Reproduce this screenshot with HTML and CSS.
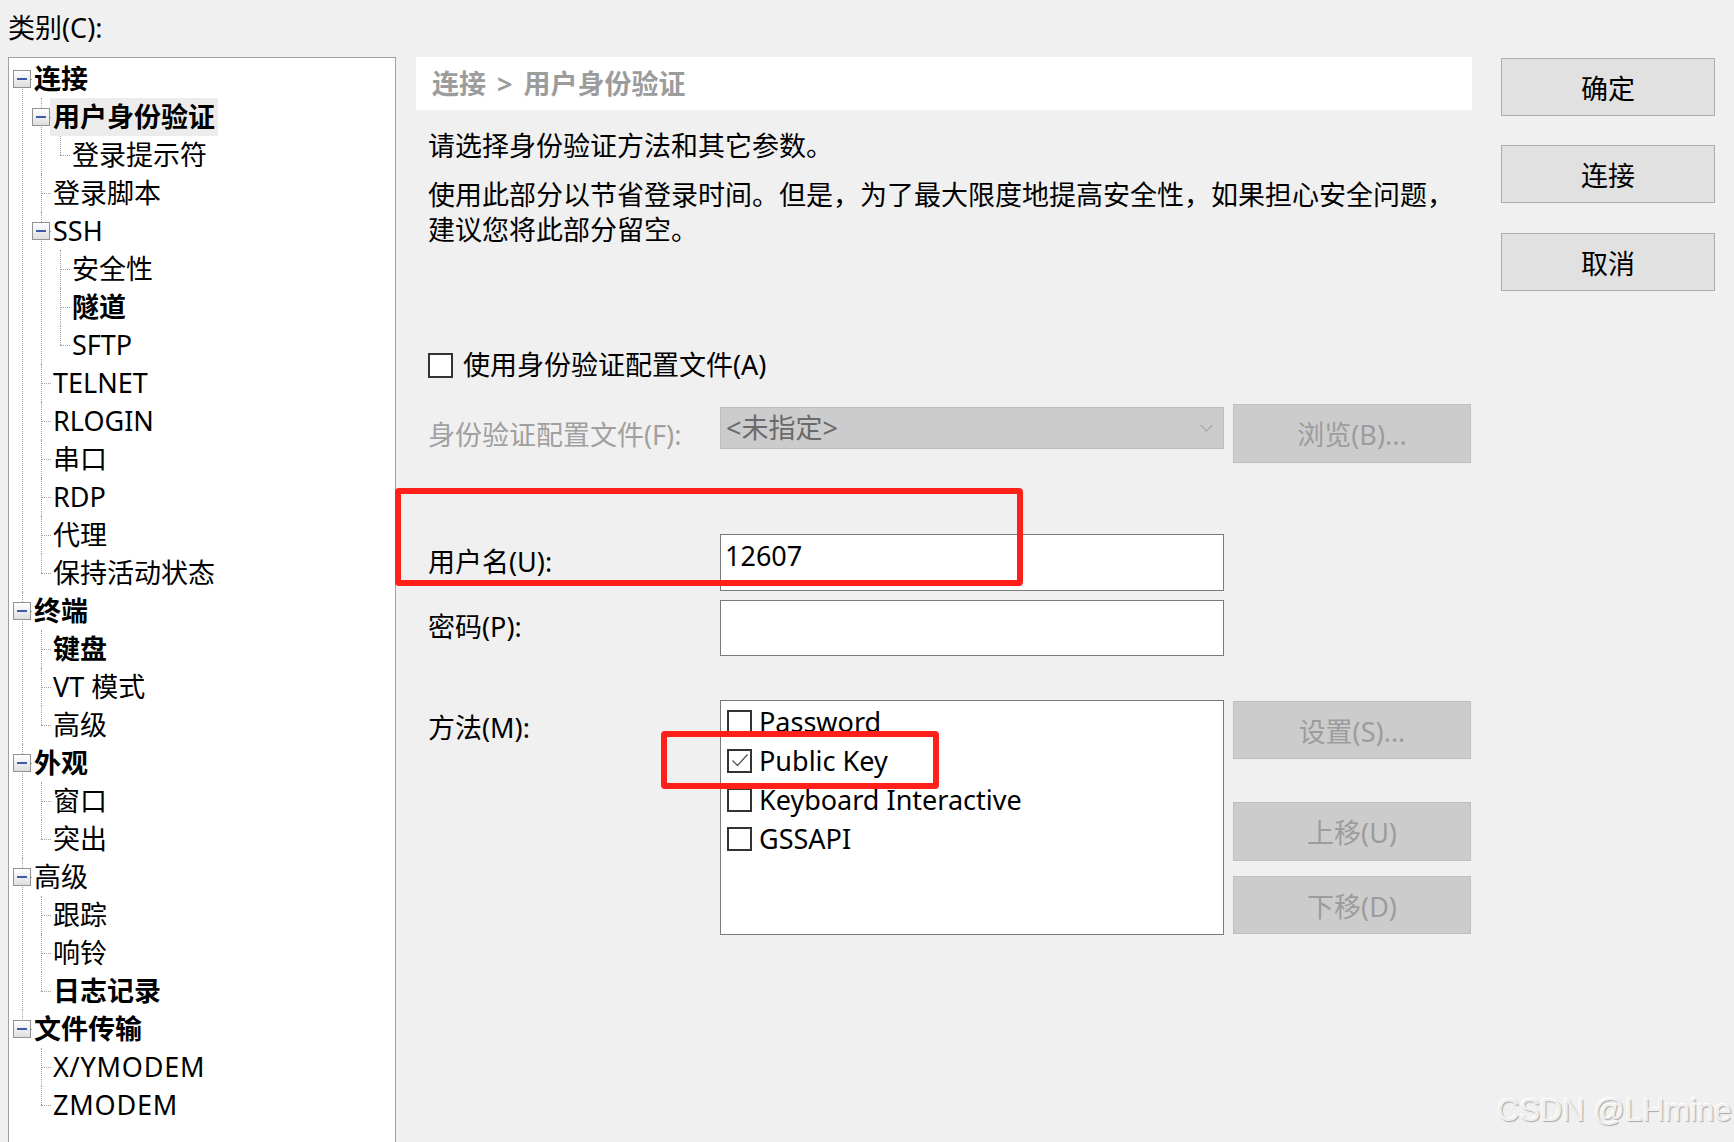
FILE: index.html
```html
<!DOCTYPE html>
<html lang="zh-CN">
<head>
<meta charset="utf-8">
<title>会话属性</title>
<link rel="stylesheet" href="styles.css">
</head>
<body>
<div class="page">
  <div class="cat-label">类别(C):</div>
  <div class="main">
    <div class="tree-panel">
      <ul class="tree l0">
        <li><div class="row"><span class="box"></span><span class="lbl b">连接</span></div>
          <ul class="l1">
            <li><div class="row"><span class="box"></span><span class="lbl b sel">用户身份验证</span></div>
              <ul class="l2">
                <li><div class="row"><span class="slot"></span><span class="lbl">登录提示符</span></div></li>
              </ul>
            </li>
            <li><div class="row"><span class="slot"></span><span class="lbl">登录脚本</span></div></li>
            <li><div class="row"><span class="box"></span><span class="lbl">SSH</span></div>
              <ul class="l2">
                <li><div class="row"><span class="slot"></span><span class="lbl">安全性</span></div></li>
                <li><div class="row"><span class="slot"></span><span class="lbl b">隧道</span></div></li>
                <li><div class="row"><span class="slot"></span><span class="lbl">SFTP</span></div></li>
              </ul>
            </li>
            <li><div class="row"><span class="slot"></span><span class="lbl">TELNET</span></div></li>
            <li><div class="row"><span class="slot"></span><span class="lbl">RLOGIN</span></div></li>
            <li><div class="row"><span class="slot"></span><span class="lbl">串口</span></div></li>
            <li><div class="row"><span class="slot"></span><span class="lbl">RDP</span></div></li>
            <li><div class="row"><span class="slot"></span><span class="lbl">代理</span></div></li>
            <li><div class="row"><span class="slot"></span><span class="lbl">保持活动状态</span></div></li>
          </ul>
        </li>
        <li><div class="row"><span class="box"></span><span class="lbl b">终端</span></div>
          <ul class="l1">
            <li><div class="row"><span class="slot"></span><span class="lbl b">键盘</span></div></li>
            <li><div class="row"><span class="slot"></span><span class="lbl">VT 模式</span></div></li>
            <li><div class="row"><span class="slot"></span><span class="lbl">高级</span></div></li>
          </ul>
        </li>
        <li><div class="row"><span class="box"></span><span class="lbl b">外观</span></div>
          <ul class="l1">
            <li><div class="row"><span class="slot"></span><span class="lbl">窗口</span></div></li>
            <li><div class="row"><span class="slot"></span><span class="lbl">突出</span></div></li>
          </ul>
        </li>
        <li><div class="row"><span class="box"></span><span class="lbl">高级</span></div>
          <ul class="l1">
            <li><div class="row"><span class="slot"></span><span class="lbl">跟踪</span></div></li>
            <li><div class="row"><span class="slot"></span><span class="lbl">响铃</span></div></li>
            <li><div class="row"><span class="slot"></span><span class="lbl b">日志记录</span></div></li>
          </ul>
        </li>
        <li><div class="row"><span class="box"></span><span class="lbl b">文件传输</span></div>
          <ul class="l1">
            <li><div class="row"><span class="slot"></span><span class="lbl wide">X/YMODEM</span></div></li>
            <li><div class="row"><span class="slot"></span><span class="lbl wide">ZMODEM</span></div></li>
          </ul>
        </li>
      </ul>
    </div>

    <div class="content">
      <div class="crumb">连接<span class="sep">&gt;</span>用户身份验证</div>
      <p class="desc desc1">请选择身份验证方法和其它参数。</p>
      <p class="desc desc2">使用此部分以节省登录时间。但是，为了最大限度地提高安全性，如果担心安全问题，<br>建议您将此部分留空。</p>
      <div class="check-row"><span class="cbox"></span><span>使用身份验证配置文件(A)</span></div>

      <div class="frow row-profile">
        <div class="flabel dis">身份验证配置文件(F):</div>
        <div class="field combo">
          <span>&lt;未指定&gt;</span>
          <svg class="chev" width="13" height="8" viewBox="0 0 13 8"><polyline points="0.5,1 6.5,7 12.5,1" fill="none" stroke="#a8a8a8" stroke-width="1.1"/></svg>
        </div>
        <div class="side"><div class="dbtn tall">浏览(B)...</div></div>
      </div>

      <div class="frow row-user">
        <div class="flabel">用户名(U):</div>
        <div class="field input h57">12607</div>
      </div>

      <div class="frow row-pass">
        <div class="flabel">密码(P):</div>
        <div class="field input h56"></div>
      </div>

      <div class="frow row-method">
        <div class="flabel">方法(M):</div>
        <div class="field listbox">
          <div class="item"><span class="lcb"></span>Password</div>
          <div class="item"><span class="lcb"><svg width="20" height="20" viewBox="0 0 20 20"><polyline points="2.5,9.5 7.5,14.5 17.5,3.5" fill="none" stroke="#555" stroke-width="1.3"/></svg></span>Public Key</div>
          <div class="item"><span class="lcb"></span>Keyboard Interactive</div>
          <div class="item"><span class="lcb"></span>GSSAPI</div>
        </div>
        <div class="side side-col">
          <div class="dbtn b1">设置(S)...</div>
          <div class="dbtn b2">上移(U)</div>
          <div class="dbtn b3">下移(D)</div>
        </div>
      </div>
    </div>

    <div class="actions">
      <div class="abtn">确定</div>
      <div class="abtn">连接</div>
      <div class="abtn">取消</div>
    </div>
  </div>

  <div class="mark mark1"></div>
  <div class="mark mark2"></div>
  <div class="watermark">CSDN @LHmine</div>
</div>
</body>
</html>
```

FILE: styles.css
```css
* { box-sizing: border-box; }
html, body { margin: 0; padding: 0; }
body {
  background: #f0f0f0;
  width: 1734px;
  height: 1142px;
  overflow: hidden;
  font-family: "Noto Sans", "Noto Sans CJK SC", sans-serif;
  font-size: 27px;
  color: #000;
}
.page { position: relative; width: 1734px; height: 1142px; overflow: hidden; }

.cat-label { height: 57px; padding: 9px 0 0 8px; line-height: 38px; }

.main { display: flex; align-items: flex-start; padding-left: 8px; }

/* ---------- tree ---------- */
.tree-panel {
  flex: none;
  width: 388px;
  height: 1100px;
  background: #fff;
  border: 1px solid #a0a0a0;
  padding-top: 2px;
}
.tree, .tree ul { list-style: none; margin: 0; padding: 0; }
.tree li { position: relative; }
.tree li::before {
  content: "";
  position: absolute;
  top: 0;
  bottom: 0;
  border-left: 1px dotted #a0a0a0;
}
.l0 > li::before { left: 13px; }
.l1 > li::before { left: 32px; }
.l2 > li::before { left: 51px; }
.l0 > li:first-child::before { top: 19px; }
.tree li:last-child::before { bottom: auto; height: 19px; }

.row {
  position: relative;
  display: flex;
  align-items: center;
  height: 38px;
  line-height: 38px;
  white-space: nowrap;
}
.row::before {
  content: "";
  position: absolute;
  top: 19px;
  width: 10px;
  border-top: 1px dotted #a0a0a0;
}
.l0 > li > .row { padding-left: 4px; }
.l0 > li > .row::before { left: 13px; }
.l1 > li > .row { padding-left: 23px; }
.l1 > li > .row::before { left: 32px; }
.l2 > li > .row { padding-left: 42px; }
.l2 > li > .row::before { left: 51px; }

.box {
  position: relative;
  z-index: 1;
  flex: none;
  width: 18px;
  height: 18px;
  border: 1px solid #929292;
  background: linear-gradient(#ffffff, #dedede);
}
.box::after {
  content: "";
  position: absolute;
  left: 3px;
  right: 3px;
  top: 7px;
  height: 2px;
  background: #3d5ca6;
}
.slot { flex: none; width: 18px; }
.lbl { margin-left: 0; padding: 0 3px; }
.lbl.b { font-weight: 700; }
.lbl.sel { background: #ececec; }
.lbl.wide { letter-spacing: 0.8px; }

/* ---------- content ---------- */
.content { flex: none; width: 1056px; margin-left: 20px; }
.crumb {
  height: 53px;
  background: #fff;
  padding-left: 16px;
  line-height: 53px;
  font-weight: 700;
  color: #9c9c9c;
}
.sep { margin: 0 11px; }
.desc { margin: 0; padding-left: 12px; line-height: 35px; white-space: nowrap; }
.desc1 { margin-top: 18px; }
.desc2 { margin-top: 14px; }

.check-row {
  margin-top: 100px;
  height: 36px;
  padding-left: 12px;
  display: flex;
  align-items: center;
  line-height: 36px;
}
.cbox {
  flex: none;
  width: 25px;
  height: 25px;
  border: 2px solid #333;
  background: #fff;
  margin-right: 10px;
}

.frow { display: flex; align-items: flex-start; padding-left: 12px; }
.flabel { flex: none; width: 292px; line-height: 36px; white-space: nowrap; }
.flabel.dis { color: #a0a0a0; }
.field { flex: none; width: 504px; }
.side { flex: none; width: 238px; margin-left: 9px; }

.row-profile { margin-top: 21px; }
.row-profile .flabel { margin-top: 13px; }
.combo {
  margin-top: 3px;
  height: 42px;
  background: #cccccc;
  border: 1px solid #bcbcbc;
  display: flex;
  align-items: center;
  padding: 0 10px 0 5px;
  color: #6a6a6a;
  line-height: 36px;
}
.chev { margin-left: auto; }

.dbtn {
  height: 58px;
  background: #cccccc;
  border: 1px solid #bfbfbf;
  color: #9c9c9c;
  display: flex;
  align-items: center;
  justify-content: center;
}
.dbtn.tall { height: 59px; }

.input {
  background: #fff;
  border: 1px solid #7a7a7a;
  padding: 3px 4px;
  line-height: 36px;
}
.h57 { height: 57px; }
.h56 { height: 56px; }

.row-user { margin-top: 71px; }
.row-user .flabel { margin-top: 10px; }
.row-pass { margin-top: 9px; }
.row-pass .flabel { margin-top: 9px; }

.row-method { margin-top: 44px; }
.row-method .flabel { margin-top: 10px; }
.listbox {
  height: 235px;
  background: #fff;
  border: 1px solid #7a7a7a;
  padding: 1px 6px;
}
.item { height: 39px; display: flex; align-items: center; white-space: nowrap; line-height: 39px; }
.lcb {
  flex: none;
  width: 25px;
  height: 24px;
  border: 2px solid #333;
  background: #fff;
  margin-right: 7px;
  display: flex;
  align-items: center;
  justify-content: center;
}
.side-col { display: flex; flex-direction: column; }
.b1 { margin-top: 1px; height: 58px; }
.b2 { margin-top: 43px; height: 59px; }
.b3 { margin-top: 15px; height: 58px; }

/* ---------- action buttons ---------- */
.actions { flex: none; width: 214px; margin-left: 29px; display: flex; flex-direction: column; }
.abtn {
  height: 58px;
  background: #e1e1e1;
  border: 1px solid #adadad;
  display: flex;
  align-items: center;
  justify-content: center;
}
.abtn:nth-child(1) { margin-top: 1px; }
.abtn:nth-child(2) { margin-top: 29px; }
.abtn:nth-child(3) { margin-top: 30px; }

/* ---------- annotations ---------- */
.mark { position: absolute; border: 6px solid #ff2119; border-radius: 4px; }
.mark1 { left: 395px; top: 488px; width: 628px; height: 98px; }
.mark2 { left: 661px; top: 731px; width: 278px; height: 58px; }

.watermark {
  position: absolute;
  left: 1497px;
  top: 1095px;
  font-family: "Liberation Sans", Arial, sans-serif;
  font-size: 31px;
  line-height: 31px;
  color: #efefef;
  text-shadow: 1px 1px 1px #a8a8a8, -1px -1px 0 #ffffff;
  white-space: nowrap;
}
```
